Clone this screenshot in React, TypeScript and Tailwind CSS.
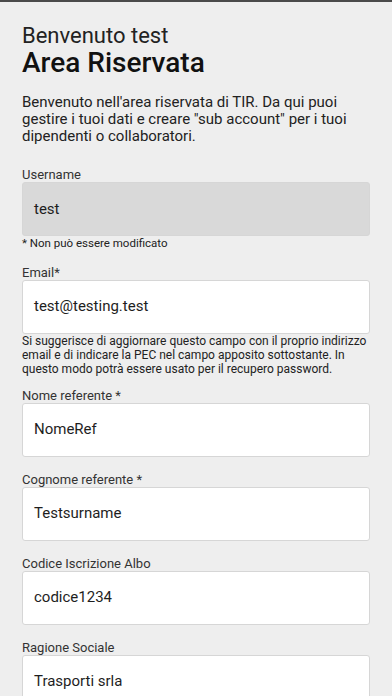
import React from "react";

type Field = {
  label: string;
  value: string;
  disabled?: boolean;
  note?: string;
  hint?: string;
};

const fields: Field[] = [
  { label: "Username", value: "test", disabled: true, note: "* Non può essere modificato" },
  {
    label: "Email*",
    value: "test@testing.test",
    hint: "Si suggerisce di aggiornare questo campo con il proprio indirizzo email e di indicare la PEC nel campo apposito sottostante. In questo modo potrà essere usato per il recupero password."
  },
  { label: "Nome referente *", value: "NomeRef" },
  { label: "Cognome referente *", value: "Testsurname" },
  { label: "Codice Iscrizione Albo", value: "codice1234" },
  { label: "Ragione Sociale", value: "Trasporti srla" }
];

function FormField({ field }: { field: Field }) {
  return (
    <div className="mb-4">
      <label className="block text-[13px] leading-[14px] text-[#333]">{field.label}</label>
      <div
        className={`flex h-[54px] items-center rounded-[3px] border border-[#d6d6d6] px-[11px] text-[15px] text-[#1e1e1e] ${
          field.disabled ? "bg-[#d9d9d9]" : "bg-white"
        }`}
      >
        {field.value}
      </div>
      {field.note && <p className="mt-px -mb-px text-[11.5px] leading-[13.5px] text-[#222]">{field.note}</p>}
      {field.hint && <p className="-mb-[3px] text-[12px] leading-[14px] text-[#222]">{field.hint}</p>}
    </div>
  );
}

export default function App() {
  return (
    <div className="h-[696px] overflow-hidden bg-[#eeeeee] font-['Roboto',sans-serif]">
      <div className="h-[2px] bg-[#4a4a4a]" />
      <div className="px-[22px] pt-[21px]">
        <h2 className="text-[22px] leading-[26px] text-[#222]">Benvenuto test</h2>
        <h1 className="-mt-[2px] text-[28px] font-medium leading-8 text-[#111]">Area Riservata</h1>
        <p className="mt-[15px] text-[15px] leading-[17px] text-[#222]">
          Benvenuto nell'area riservata di TIR. Da qui puoi gestire i tuoi dati e creare "sub account" per i tuoi dipendenti o collaboratori.
        </p>
        <form className="mt-[23px]">
          {fields.map((f) => (
            <FormField key={f.label} field={f} />
          ))}
        </form>
      </div>
    </div>
  );
}
